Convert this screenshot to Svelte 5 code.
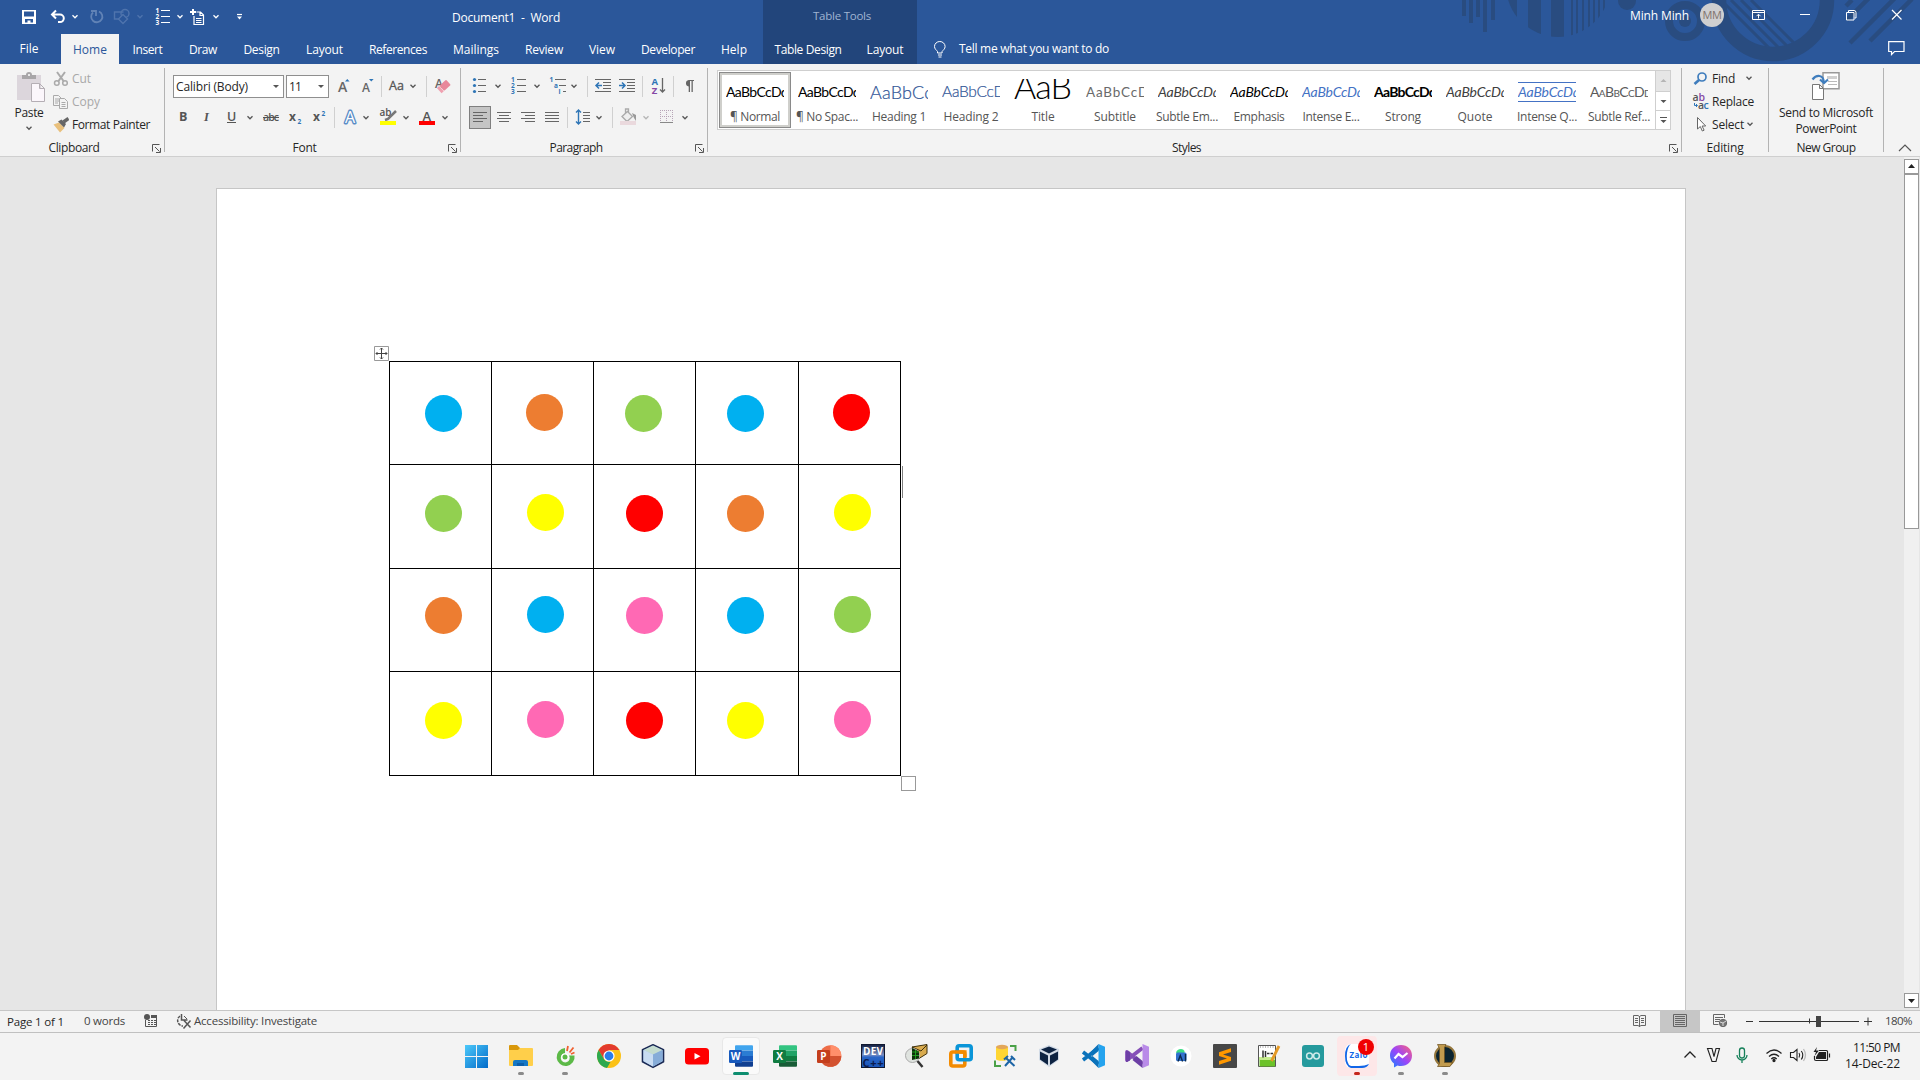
<script>
  // Spreads a label's letters so that it takes exactly the given width.
  function fit(node, width) {
    if (!width) return;
    const natural = node.getBoundingClientRect().width;
    node.style.letterSpacing = (width - natural) / node.textContent.length + 'px';
    node.style.width = width + 'px';
  }

  const tabs = [
    ['File', 19], ['Home', 34], ['Insert', 30], ['Draw', 28], ['Design', 36], ['Layout', 37],
    ['References', 58], ['Mailings', 46], ['Review', 38], ['View', 26], ['Developer', 54], ['Help', 26]
  ];

  const styles = [
    { s: 'AaBbCcDd', w: 62, n: '¶ Normal', l: 50, k: 'normal' },
    { s: 'AaBbCcDd', w: 62, n: '¶ No Spac...', l: 62, k: 'normal' },
    { s: 'AaBbCc', w: 63, n: 'Heading 1', l: 54, k: 'h1' },
    { s: 'AaBbCcD', w: 63, n: 'Heading 2', l: 55, k: 'h2' },
    { s: 'AaB', w: 57, n: 'Title', l: 23, k: 'title' },
    { s: 'AaBbCcD', w: 63, n: 'Subtitle', l: 42, k: 'subtitle' },
    { s: 'AaBbCcDd', w: 62, n: 'Subtle Em...', l: 62, k: 'it grey' },
    { s: 'AaBbCcDd', w: 62, n: 'Emphasis', l: 51, k: 'it' },
    { s: 'AaBbCcDd', w: 62, n: 'Intense E...', l: 57, k: 'it blue' },
    { s: 'AaBbCcDd', w: 62, n: 'Strong', l: 36, k: 'strong' },
    { s: 'AaBbCcDd', w: 62, n: 'Quote', l: 35, k: 'it grey' },
    { s: 'AaBbCcDd', w: 62, n: 'Intense Q...', l: 60, k: 'it blue ruled' },
    { s: 'AaBbCcDd', w: 61, n: 'Subtle Ref...', l: 62, k: 'caps' }
  ];

  const B = '#00b0f0', O = '#ed7d31', G = '#92d050', R = '#ff0000', Y = '#ffff00', P = '#ff69b4';
  const colours = [
    [B, O, G, B, R],
    [G, Y, R, O, Y],
    [O, B, P, B, G],
    [Y, P, R, Y, P]
  ];
  // Centres of the discs, measured from the table's top left corner.
  const xs = [54.5, 156.5, 255.5, 356.5, 463.5];
  const ys = [52.5, 152.5, 254.5, 359.5];
  const dots = colours.flatMap((row, r) =>
    row.map((fill, c) => ({
      fill,
      x: xs[c] - (r === 0 && (c === 1 || c === 2 || c === 4) ? 1 : 0),
      y: ys[r] - (c === 1 || c === 4 ? 1 : 0)
    }))
  );

  const apps = ['windows', 'explorer', 'coccoc', 'chrome', 'netbeans', 'youtube', 'word', 'excel', 'powerpoint', 'devcpp',
    'lens', 'vmware', 'database', 'virtualbox', 'vscode', 'visualstudio', 'android', 'sublime', 'notepad', 'arduino',
    'zalo', 'messenger', 'league'];
  const running = ['explorer', 'coccoc', 'messenger', 'league'];
</script>

{#snippet t(s, w, c = '')}<span class={'t ' + c} use:fit={w}>{s}</span>{/snippet}

{#snippet chev(x, y, c = '#555')}
  <path d="M{x - 2.5} {y - 1.2}l2.5 2.5l2.5 -2.5" fill="none" stroke={c} stroke-width="1.3" />
{/snippet}

{#snippet vsep(x, y)}
  <path d="M{x + 0.5} {y}v21" stroke="#d0d0d0" fill="none" />
{/snippet}

{#snippet launcher()}
  <svg class="launcher" width="9" height="9" viewBox="0 0 9 9" fill="none" stroke="#555"><path d="M.5 7.5v-7h7M3 3l4.5 4.5M8.5 4v4.5h-4.5" /></svg>
{/snippet}

{#snippet office(letter, dark, tones)}
  <path d="M7 1.2h16a1 1 0 0 1 1 1V6.6H6V2.2a1 1 0 0 1 1-1z" fill={tones[0]} />
  <path d="M6 6.6h18V12H6z" fill={tones[1]} />
  <path d="M6 12h18v5.4H6z" fill={tones[2]} />
  <path d="M6 17.4h18v4.4a1 1 0 0 1-1 1H7a1 1 0 0 1-1-1z" fill={tones[3]} />
  <rect x="0" y="6" width="13" height="13" rx="1.2" fill={dark} />
  <text x="6.5" y="16" text-anchor="middle" font-size="10" font-weight="700" fill="#fff">{letter}</text>
{/snippet}

<div class="screen">
  <header class="head">
    <svg class="deco" width="480" height="64" viewBox="1440 0 480 64" fill="#294c80">
      <defs>
        <clipPath id="disc"><circle cx="1558" cy="-15" r="52" /></clipPath>
        <clipPath id="inner"><circle cx="1773" cy="0" r="47" /></clipPath>
      </defs>
      <path d="M1462 0h4v16h-4zM1469 0h4v23h-4zM1476 0h4v17h-4zM1483 0h4v32h-4zM1491 0h4v20h-4z" />
      <path clip-path="url(#disc)" d="M1506 0h11v40h-11zM1528 0h13v40h-13zM1551 0h13v40h-13zM1571 0h2v40h-2zM1576 0h2v40h-2zM1582 0h2v40h-2zM1588 0h2v40h-2zM1593 0h2v40h-2zM1598 0h2v40h-2zM1603 0h2v40h-2zM1608 0h2v40h-2z" />
      <circle cx="1627" cy="1" r="9" />
      <circle cx="1685" cy="21" r="16" fill="none" stroke="#294c80" stroke-width="8" />
      <circle cx="1685" cy="21" r="6" />
      <circle cx="1773" cy="0" r="54" fill="none" stroke="#294c80" stroke-width="14.5" />
      <path clip-path="url(#inner)" stroke="#294c80" stroke-width="3" d="M1721 0l60 60M1731 0l60 60M1741 0l60 60M1751 0l60 60" />
      <path stroke="#294c80" stroke-width="4.5" d="M1846 6l6-6M1847 20l22-22M1850 43l47-47M1870 41l42-42M1897 14l14-14" />
    </svg>
    <div class="titlebar">
      <svg width="452" height="34" viewBox="0 0 452 34" fill="none" stroke="#fff" stroke-width="1.4">
        <path fill="#fff" stroke="none" fill-rule="evenodd" d="M22 10h14v14h-14zM24 11.5v5h10v-5zM25 19v3.5h2.5v-2h3v2h2.500v-3.500z" />
        <path stroke-width="2" d="M56 10.500l-4 4l4 4M52.500 14.500h7.500a3.800 3.800 0 0 1 0 7.600h-2" />
        {@render chev(75, 16.5, '#fff')}
        <path stroke="#6183b6" stroke-width="1.800" d="M93 12.500a5.600 5.600 0 1 0 6 -1M91 11h5v5" />
        <g stroke="#4f74ad"><path d="M122 19h-7.500v-7h9" /><circle cx="125" cy="13.500" r="4" /><path fill="#2b579a" d="M123 14.500l4.500 4.500l-4.500 4.500l-4.500 -4.500z" /></g>
        {@render chev(140, 16.5, '#4f74ad')}
        <path stroke-width="1" d="M161 10.500h9M161 16.500h9M161 22.500h9" />
        <g fill="#fff" stroke="none" font-size="6.500" font-weight="700"><text x="155.500" y="13">1</text><text x="155.500" y="19">2</text><text x="155.500" y="25.200">3</text></g>
        {@render chev(180, 16.5, '#fff')}
        <path stroke-width="1.200" d="M194 16v8.500h9.500v-9.500l-3-3h-4M200 12v3.500h3.500M196 18.500h5.500M196 20.500h5.500M196 22.500h5.500" /><path stroke-width="2" d="M190 12h6M193 9v6" />
        {@render chev(216, 16.5, '#fff')}
        <path stroke-width="1.200" d="M237 14.500h5" /><path fill="#fff" stroke="none" d="M237 16.500h5l-2.500 3z" />
      </svg>
      <div class="doctitle">{@render t('Document1  -  Word', 108)}</div>
      <div class="tools">{@render t('Table Tools', 58)}</div>
      <div class="user">{@render t('Minh Minh', 59)}<span class="avatar">MM</span></div>
      <svg width="196" height="34" viewBox="1724 0 196 34" fill="none" stroke="#fff" stroke-width="1">
        <path d="M1752.500 10.500h12v9h-12zM1752.500 12.500h12M1758.500 18.500v-4M1756.500 16.200l2-2l2 2" />
        <path d="M1800 14.500h10" />
        <path d="M1846.500 12.500h7.500v7.500h-7.500zM1848.500 12v-1.500h5.500q2 0 2 2v5.500h-1.500" />
        <path stroke-width="1.200" d="M1892 10l9.500 9.500M1901.500 10l-9.500 9.500" />
      </svg>
    </div>
    <nav class="tabs">
      {#each tabs as [name, w], i}
        <div class="tab" class:on={i === 1} class:file={i === 0} class:last={i === 11}>{@render t(name, w)}</div>
      {/each}
      <div class="tab ctx">{@render t('Table Design', 67)}</div>
      <div class="tab ctx">{@render t('Layout', 37)}</div>
      <div class="tell">
        <svg width="12" height="17" viewBox="0 0 12 17" fill="none" stroke="#fff"><path d="M3.500 12v-1.500c-1-1.500-3-2.500-3-5a5.300 5 0 0 1 10.600 0c0 2.500-2 3.500-3 5v1.500zM4 14h4M4.500 16h3" /></svg>
        {@render t('Tell me what you want to do', 150)}
      </div>
      <svg class="comment" width="17" height="15" viewBox="0 0 17 15" fill="none" stroke="#fff" stroke-width="1.200"><path d="M.700 .700h15.300v9.800h-9.500l-3 3v-3h-2.800z" /></svg>
    </nav>
  </header>

  <section class="ribbon">
    <div class="group g-clip">
      <div class="body">
        <div class="paste">
          <svg width="30" height="31" viewBox="16 72 30 31"><path fill="#dcd6dc" d="M17 75h24v25h-24z" /><path fill="#a8a6a8" d="M22 79v-4h4q0-3 3-3t3 3h4v4z" /><circle cx="29" cy="75" r="1" fill="#fff" /><path fill="#fbf6fb" stroke="#b4aeb4" d="M31.500 83.500h8l5 5v13h-13zM39.500 83.500v5h5" /></svg>
          {@render t('Paste', 29)}
          <svg width="10" height="10" viewBox="0 0 10 10">{@render chev(5, 5)}</svg>
        </div>
        <div class="cmds">
          <div class="cmd off"><svg width="16" height="16" viewBox="53 70 16 16" fill="none" stroke="#aaa" stroke-width="1.500"><circle cx="56.800" cy="82" r="2.300" /><circle cx="65" cy="82" r="2.300" /><path stroke-width="2" d="M57 71l6.500 9M65 71l-6.500 9" /></svg>{@render t('Cut', 19)}</div>
          <div class="cmd off"><svg width="16" height="16" viewBox="53 93 16 16" fill="#f3f3f3" stroke="#aaa"><path d="M53.500 94.500h5l3 3v7h-8zM55 98h4M55 100h4M55 102h3" /><path d="M59.500 97.500h5l3 3v7h-8zM61.500 101.500h4M61.500 103.500h4M61.500 105.500h4" /></svg>{@render t('Copy', 28)}</div>
          <div class="cmd"><svg width="16" height="16" viewBox="53 116 16 16"><path fill="#e9c07c" d="M53.500 123.500l5.500-2l5.500 5.500l-4.500 4.500z" /><path fill="#666" d="M58 120.500l3.500-2l4.500 4.500l-2 3.500z" /><path stroke="#666" stroke-width="3.500" d="M63.500 121l5-3.500" /></svg>{@render t('Format Painter', 78)}</div>
        </div>
      </div>
      <div class="label">{@render t('Clipboard', 51)}{@render launcher()}</div>
    </div>
    <div class="vs"></div>

    <div class="group g-font">
      <div class="body col">
        <div class="frow">
          <div class="combo c1">{@render t('Calibri (Body)', 72)}<i></i></div>
          <div class="combo c2">{@render t('11', 12)}<i></i></div>
          <svg width="131" height="24" viewBox="329 75 131 24" font-weight="600">
            <text x="338" y="92" font-size="14" fill="#666">A</text><path d="M345 81.500l2.300-2.500l2.300 2.500z" fill="#2e75b6" />
            <text x="362" y="92" font-size="12" fill="#666">A</text><path d="M369 79l2.300 2.500l2.300-2.500z" fill="#2e75b6" />
            {@render vsep(381, 76)}
            <text x="389" y="90" font-size="12.500" font-weight="400" fill="#555" stroke="#555" stroke-width=".300">Aa</text>
            {@render chev(413, 86)}
            {@render vsep(426, 76)}
            <text x="435" y="88" font-size="12" fill="#666">A</text><g transform="rotate(-42 444 87)"><rect x="441.500" y="83" width="9" height="7" rx="1" fill="#e8879b" /><rect x="438" y="83" width="3" height="7" fill="#f0a0b0" /></g>
          </svg>
        </div>
        <svg width="290" height="24" viewBox="170 105 290 24" fill="#555">
          <text x="179" y="121" font-size="12.500" font-weight="700">B</text>
          <text x="204" y="121" font-size="12.500" font-style="italic" font-family="Liberation Serif" font-weight="700">I</text>
          <text x="227" y="120.500" font-size="12.500" font-weight="600">U</text><path d="M227 122h9v1h-9z" />
          {@render chev(250, 117.5)}
          <text x="263" y="121" font-size="10.500" font-weight="600" textLength="16">abc</text><path d="M263 117h16v1h-16z" />
          <text x="289" y="121" font-size="12" font-weight="700">x</text><text x="297.500" y="123.500" font-size="6.500" font-weight="700" fill="#2e75b6">2</text>
          <text x="313" y="121" font-size="12" font-weight="700">x</text><text x="321.500" y="115.500" font-size="6.500" font-weight="700" fill="#2e75b6">2</text>
          {@render vsep(334, 107)}
          <text x="345" y="122.500" font-size="16" font-weight="400" fill="#fff" stroke="#5a8cc6" stroke-width="2.800" stroke-linejoin="round" paint-order="stroke">A</text>
          {@render chev(366, 117.5)}
          <text x="379.500" y="116" font-size="10" font-weight="600" textLength="12">ab</text><path d="M385 120l3-1l8-8" stroke="#777" stroke-width="2.500" fill="none" /><path fill="#ff0" d="M380 121h16v4h-16z" />
          {@render chev(406, 117.5)}
          <text x="422.500" y="120.500" font-size="13" font-weight="600">A</text><path fill="#f00" d="M419 121h16v4h-16z" />
          {@render chev(445, 117.5)}
        </svg>
      </div>
      <div class="label">{@render t('Font', 24)}{@render launcher()}</div>
    </div>
    <div class="vs"></div>

    <div class="group g-para">
      <div class="body">
        <svg width="246" height="75" viewBox="461 64 246 75" fill="none" stroke="#666">
          <g fill="#2e75b6" stroke="none"><circle cx="474.500" cy="79.500" r="1.600" /><circle cx="474.500" cy="85.500" r="1.600" /><circle cx="474.500" cy="91.500" r="1.600" /></g>
          <path d="M478 79.500h8M478 85.500h8M478 91.500h8" />{@render chev(498, 86)}
          <path d="M517 79.500h9M517 85.500h9M517 91.500h9" />
          <g fill="#2e75b6" stroke="none" font-size="6.500" font-weight="700"><text x="511" y="82">1</text><text x="511" y="88">2</text><text x="511" y="94">3</text><text x="549.500" y="82">1</text><text x="554" y="88">a</text><text x="558.500" y="94">i</text></g>
          {@render chev(537, 86)}
          <path d="M555 79.500h11M559 85.500h7M563 91.500h3" />{@render chev(574, 86)}
          {@render vsep(587, 76)}
          <path d="M595 79.500h16M603 82.500h8M603 85.500h8M603 88.500h8M595 91.500h16" /><path stroke="#2e75b6" stroke-width="1.500" d="M602 85.500h-5.500M599 82.500l-3 3l3 3" />
          <path d="M619 79.500h16M627 82.500h8M627 85.500h8M627 88.500h8M619 91.500h16" /><path stroke="#2e75b6" stroke-width="1.500" d="M619 85.500h5.500M622 82.500l3 3l-3 3" />
          {@render vsep(642, 76)}
          <g stroke="none" font-size="9.500" font-weight="700"><text x="651.500" y="85" fill="#2e75b6">A</text><text x="651.800" y="93.500" fill="#8548a5">Z</text></g>
          <path stroke-width="1.300" d="M662.500 78v14M660 89.500l2.500 2.500l2.500-2.500" />
          {@render vsep(673, 76)}
          <path fill="#666" stroke="none" d="M694 80v1h-1.200v11h-1.300v-11h-1.500v11h-1.300v-5.500a3.300 3.300 0 0 1 0-6.500z" />
          <rect x="469.500" y="106.500" width="21" height="22" fill="#c5c5c5" stroke="#7f7f7f" />
          <path d="M473 112.500h14M473 115.500h10M473 118.500h14M473 121.500h10" />
          <path d="M497 112.500h14M499 115.500h10M497 118.500h14M499 121.500h10" />
          <path d="M521 112.500h14M525 115.500h10M521 118.500h14M525 121.500h10" />
          <path d="M545 112.500h14M545 115.500h14M545 118.500h14M545 121.500h14" />
          {@render vsep(567, 107)}
          <path stroke="#2e75b6" stroke-width="1.400" d="M578.500 110v14M576 112.500l2.500-2.500l2.500 2.500M576 121.500l2.500 2.500l2.500-2.500" /><path d="M583 112.500h7M583 115.500h7M583 118.500h7M583 121.500h7" />
          {@render chev(599, 117.5)}
          {@render vsep(612, 107)}
          <path fill="#eee" stroke="#aaa" stroke-width="1.300" d="M622 116.500l5.500-5l5 5l-5.500 5zM625.500 114v-5h3v4" /><path fill="#999" stroke="none" d="M632 113l4 2v6l-2-3z" /><path fill="#ead9dd" stroke="none" d="M620 121h16v4h-16z" />
          {@render chev(646, 117.5, '#b5b5b5')}
          <path stroke="#b7a5b7" stroke-dasharray="1 1" d="M660 110.500h13M660 116.500h13M660.500 110v12M666.500 110v12M672.500 110v12" /><path stroke="#888" d="M660 122.500h13" />
          {@render chev(685, 117.5)}
        </svg>
      </div>
      <div class="label">{@render t('Paragraph', 53)}{@render launcher()}</div>
    </div>
    <div class="vs"></div>

    <div class="group g-styles">
      <div class="body">
        <div class="gallery">
          {#each styles as st, i}
            <div class="style" class:sel={i === 0}>
              <div class={'sample ' + st.k}>{@render t(st.s, st.w)}</div>
              <div class="sname">{@render t(st.n, st.l)}</div>
            </div>
          {/each}
          <div class="scroller">
            <div class="dis"><svg width="15" height="19" viewBox="0 0 15 19"><path d="M4.500 11h6l-3-3z" fill="#b5b5b5" /></svg></div>
            <div><svg width="15" height="18" viewBox="0 0 15 18"><path d="M4.500 8h6l-3 3z" fill="#555" /></svg></div>
            <div><svg width="15" height="18" viewBox="0 0 15 18"><path d="M4 6h7v1h-7zM4.500 9h6l-3 3z" fill="#555" /></svg></div>
          </div>
        </div>
      </div>
      <div class="label">{@render t('Styles', 29)}{@render launcher()}</div>
    </div>
    <div class="vs"></div>

    <div class="group g-edit">
      <div class="body">
        <div class="cmds">
          <div class="cmd"><svg width="17" height="16" viewBox="1692 71 17 16" fill="none" stroke="#3f7dbd"><circle cx="1702" cy="77" r="4" stroke-width="1.700" /><path stroke-width="2.600" d="M1699 80l-4.500 4" /></svg>{@render t('Find', 23)}<svg class="cv" width="10" height="10" viewBox="0 0 10 10">{@render chev(5, 4)}</svg></div>
          <div class="cmd"><svg width="17" height="17" viewBox="1692 93 17 17" font-size="10.500" font-weight="600"><text x="1692.500" y="101" fill="#555">a</text><text x="1698.500" y="101" fill="#8548a5">b</text><text x="1698" y="109" fill="#555">a</text><text x="1703.500" y="109" fill="#2e75b6">c</text><path d="M1694.500 103v2.500h2.500M1696 104l1.500 1.500l-1.500 1.500" fill="none" stroke="#2e75b6" /></svg>{@render t('Replace', 42)}</div>
          <div class="cmd"><svg width="17" height="17" viewBox="1692 116 17 17"><path fill="#fff" stroke="#666" d="M1697.500 117.500v11.500l2.800-2.500l2 4.500l1.800-.800l-2-4.200h3.600z" /></svg>{@render t('Select', 32)}<svg class="cv near" width="10" height="10" viewBox="0 0 10 10">{@render chev(5, 4)}</svg></div>
        </div>
      </div>
      <div class="label wide">{@render t('Editing', 37)}</div>
    </div>
    <div class="vs"></div>

    <div class="group g-new">
      <div class="body col send">
        <svg width="30" height="30" viewBox="1811 71 30 30"><path fill="#fff" stroke="#999" stroke-width="1.500" d="M1823 72.800h16v16h-16z" /><path fill="#d0d0d0" d="M1827 76h10v3h-10z" /><path d="M1828 81.500h9M1828 84.500h9" stroke="#bbb" /><path fill="#fff" stroke="#777" d="M1812.500 84.500h7l4 4v11h-11zM1819.500 84.500v4h4" /><path fill="none" stroke="#3f7dbd" stroke-width="2.200" d="M1812.500 79.500q3-4 7-3.500t4.500 6.500" /><path fill="none" stroke="#3f7dbd" stroke-width="2.200" d="M1820 79.500l4 3.500l4-3.500" /></svg>
        {@render t('Send to Microsoft', 94)}
        {@render t('PowerPoint', 61)}
      </div>
      <div class="label wide">{@render t('New Group', 59)}</div>
    </div>
    <div class="vs"></div>
    <svg class="collapse" width="14" height="8" viewBox="0 0 14 8"><path d="M1 7l6-6l6 6" fill="none" stroke="#555" stroke-width="1.200" /></svg>
  </section>

  <main class="canvas">
    <div class="page">
      <div class="tablewrap">
        <div class="grid">{#each dots as _}<div></div>{/each}</div>
        <svg class="over" width="512" height="415" viewBox="0 0 512 415">
          {#each dots as d}<circle cx={d.x} cy={d.y} r="18.500" fill={d.fill} />{/each}
        </svg>
        <svg class="handle" width="15" height="15" viewBox="0 0 15 15" fill="none" stroke="#444"><path stroke="#999" fill="#fff" d="M.500 .500h14v14h-14z" /><path d="M7.500 2v11M2 7.500h11M6 3.500l1.500-1.500l1.500 1.500M6 11.500l1.500 1.500l1.500-1.500M3.500 6l-1.500 1.500l1.500 1.500M11.500 6l1.500 1.500l-1.500 1.500" /></svg>
        <div class="caret"></div>
        <div class="resize"></div>
      </div>
    </div>
    <div class="scrollbar">
      <div class="sb"><svg width="15" height="15" viewBox="0 0 15 15"><path d="M4 9h7l-3.500-4z" fill="#222" /></svg></div>
      <div class="thumb"></div>
      <div class="sb end"><svg width="15" height="15" viewBox="0 0 15 15"><path d="M4 6h7l-3.500 4z" fill="#222" /></svg></div>
    </div>
  </main>

  <footer class="status">
    <div class="st1">{@render t('Page 1 of 1', 57)}</div>
    <div class="st2">{@render t('0 words', 41)}</div>
    <svg width="52" height="20" viewBox="142 1011 52 20" fill="none" stroke="#555"><circle cx="147" cy="1017" r="3" fill="#555" stroke="none" /><path d="M151 1015h6v3h-6z" fill="#555" stroke="none" /><path d="M145.500 1020v6.500h11v-11" /><path stroke-dasharray="2 1" d="M148 1020.500h8M148 1022.500h8M148 1024.500h8" /><path stroke-width="1.500" stroke-dasharray="3 1" d="M180 1016a5.500 5.500 0 0 0 3 10" /><path stroke-width="1.500" d="M181.500 1014v6h6M184 1020.500l6.500 7M190.500 1020.500l-7 8" /><path d="M184 1016l3 3" /></svg>
    {@render t('Accessibility: Investigate', 123)}
    <div class="fill"></div>
    <svg width="60" height="21" viewBox="1600 1011 60 21" fill="none" stroke="#666"><path d="M1633.500 1015.500h4.500l1.500 1l1.500-1h4.500v10h-4.500l-1.500 1l-1.500-1h-4.500zM1639.500 1016v11M1635 1018.500h3M1635 1020.500h3M1635 1022.500h3M1641 1018.500h3M1641 1020.500h3M1641 1022.500h3" /></svg>
    <div class="viewsel"><svg width="40" height="21" viewBox="1660 1011 40 21" fill="none" stroke="#666"><path d="M1673.500 1014.500h13v12h-13zM1675 1016.500h10M1675 1018.500h10M1675 1020.500h10M1675 1022.500h10M1675 1024.500h10" /></svg></div>
    <svg width="185" height="21" viewBox="1700 1011 185 21" fill="none" stroke="#666"><path d="M1724.500 1018v-3.500h-11v10h5M1715 1017.500h8M1715 1019.500h5M1715 1021.500h4" /><circle cx="1723" cy="1023" r="3.700" fill="#777" stroke="#666" /><path stroke="#f3f3f3" stroke-width=".800" d="M1720 1022l3 1l3-2M1723 1023v3" />
      <g stroke="#333"><path d="M1746 1021.500h7M1864 1021.500h8M1868 1017.500v8M1759 1021.500h100M1809.500 1018.500v5" /></g><path fill="#444" stroke="none" d="M1816 1016h5v11h-5z" /></svg>
    <div class="zoom">{@render t('180%', 27)}</div>
  </footer>

  <footer class="taskbar">
    <div class="apps">
      {#each apps as app}
        <div class={'app ' + app} class:running={running.includes(app)}>
          <svg width="24" height="24" viewBox="0 0 24 24">
            {#if app === 'windows'}
              <defs><linearGradient id="wg" x1="0" y1="0" x2="24" y2="24" gradientUnits="userSpaceOnUse"><stop offset="0" stop-color="#4ecbfb" /><stop offset="1" stop-color="#0068c8" /></linearGradient></defs>
              <path fill="url(#wg)" d="M0 1h11v11h-11zM12 1h11v11h-11zM0 13h11v11h-11zM12 13h11v11h-11z" />
            {:else if app === 'explorer'}
              <path fill="#d9980b" d="M0 2q0-1 1-1h7l3 3v4h-11z" /><path fill="#ffcf4a" d="M0 6h9l2-2h12q1 0 1 1v16q0 1-1 1h-22q-1 0-1-1z" /><path fill="#1577c4" d="M4 22v-4q0-2 2-2h11q2 0 2 2v4z" /><path fill="#0c5ea8" d="M8 19h7v3h-7z" />
            {:else if app === 'coccoc'}
              <path fill="#5cb947" d="M12 4a9 9 0 1 0 9.500 7.500h-5.500a4.500 4.500 0 1 1-4-2z" /><circle cx="12" cy="13" r="3.800" fill="#fff" /><circle cx="12" cy="13" r="2.500" fill="#5cb947" /><path fill="none" stroke="#f06030" stroke-width="1.800" d="M14 7l1-5M16.500 8.500l4-5M18 10l3.500-1.500" />
            {:else if app === 'chrome'}
              <circle cx="12" cy="12" r="12" fill="#fbc116" /><path fill="#e33b2e" d="M1.600 6a12 12 0 0 1 20.800 0h-10.400l-5.200 9z" /><path fill="#2da94f" d="M1.600 6l5.200 9q2 3 5.200 3l1.500 0l-3.500 5.900a12 12 0 0 1-8.400-17.900z" /><circle cx="12" cy="12" r="5.600" fill="#fff" /><circle cx="12" cy="12" r="4.400" fill="#2a7de9" />
            {:else if app === 'netbeans'}
              <path fill="#a9c8e8" stroke="#1b2a55" stroke-width="1.600" stroke-linejoin="round" d="M12 .800l10.500 5v12l-10.500 5.600l-10.500-5.600v-12z" /><path fill="#c5dccf" d="M12 1.500l9.500 4.500l-9.500 4.500l-9.500-4.500z" /><path fill="#86acd8" d="M12 10.500l9.500-4.500v11l-9.500 5.500z" /><path fill="#c9dcf2" d="M12 10.500l-9.500-4.500v11l9.500 5.500z" />
            {:else if app === 'youtube'}
              <rect y="4" width="24" height="16.500" rx="3.500" fill="#f00" /><path fill="#fff" d="M9.500 9v6.500l6-3.250z" />
            {:else if app === 'word'}
              {@render office('W', '#185abd', ['#41a5ee', '#2b7cd3', '#185abd', '#103f91'])}
            {:else if app === 'excel'}
              {@render office('X', '#107c41', ['#33c481', '#21a366', '#107c41', '#185c37'])}
            {:else if app === 'powerpoint'}
              <circle cx="13.500" cy="12" r="10.800" fill="#ed6c47" /><path fill="#ff8f6b" d="M13.500 1.200a10.800 10.800 0 0 1 10.800 10.800h-10.800z" /><path fill="#d35230" d="M2.700 12h21.600a10.800 10.800 0 0 1-21.600 0z" /><rect y="6" width="13" height="13" rx="1.200" fill="#c43e1c" /><text x="6.500" y="16" text-anchor="middle" font-size="10" font-weight="700" fill="#fff">P</text>
            {:else if app === 'devcpp'}
              <defs><linearGradient id="dg" x1="0" y1="0" x2="0" y2="1"><stop offset="0" stop-color="#101c3c" /><stop offset=".450" stop-color="#7a8fc4" /><stop offset=".550" stop-color="#2a66c8" /><stop offset="1" stop-color="#1a55b8" /></linearGradient></defs>
              <rect x=".500" y=".500" width="23" height="23" fill="url(#dg)" stroke="#101830" /><text x="12" y="11" text-anchor="middle" font-size="10" font-weight="700" fill="#fff" textLength="20">DEV</text><text x="12" y="22.500" text-anchor="middle" font-size="11" font-weight="700" fill="#0b1b4c" textLength="21">C++</text>
            {:else if app === 'lens'}
              <path fill="#d9ab4e" stroke="#3f300c" d="M7 3l15-2.500v9l-8 5z" /><path fill="none" stroke="#3f300c" d="M7 3l9 4l6-6" /><circle cx="7.500" cy="11.500" r="7" fill="#dfe3df" stroke="#aaa" /><path fill="#0b300b" d="M7 4l7 3.500v7l-7 1.500z" /><path stroke="#25b425" stroke-width=".800" d="M7 8h7M7 11.500h7M10.500 6v9" /><path stroke="#333" stroke-width="2.500" d="M12.500 17l5 6" />
            {:else if app === 'vmware'}
              <rect x="1.800" y="8" width="14" height="14" rx="2" fill="none" stroke="#f38b00" stroke-width="3.600" /><rect x="8.200" y="1.800" width="14" height="14" rx="2" fill="none" stroke="#0a95d8" stroke-width="3.600" /><path d="M6 8h9.800v5" fill="none" stroke="#f38b00" stroke-width="3.600" />
            {:else if app === 'database'}
              <path fill="#ffd633" d="M3 3h12v12h-12z" /><ellipse cx="9" cy="15" rx="6" ry="1.800" fill="#ffd633" /><ellipse cx="9" cy="3" rx="6" ry="2.200" fill="#e3a75a" /><path fill="none" stroke="#4aa147" stroke-width="2" d="M17 2h5.500v5M2 16.500v5.500h6" /><path fill="none" stroke="#1d65a6" stroke-width="2" d="M12 22l8-9M13 14l8.500 8M11 15.500l4-3.500M18 12l4 4" />
            {:else if app === 'virtualbox'}
              <path fill="#d2dbe6" d="M12 1l10 4v11l-10 7l-10-7v-11z" /><path fill="#0d2342" d="M12 2.500l8 3l-8 4l-8-4zM3 7.500l8 4v9.500l-8-5.500zM21 7.500l-8 4v9.500l8-5.500z" />
            {:else if app === 'vscode'}
              <path fill="none" stroke="#0b72ba" stroke-width="3.600" stroke-linejoin="round" d="M17.500 4l-15.500 12M2 8l15.500 12" /><path fill="#25a3ee" d="M17.500 0l6.500 2.800v18.400l-6.500 2.800z" /><path fill="#0b72ba" d="M17.500 0v7l-6 5l-3-3zM17.500 24v-7l-6-5l-3 3z" />
            {:else if app === 'visualstudio'}
              <path fill="none" stroke="#8650b8" stroke-width="3.800" stroke-linejoin="round" d="M17.500 4l-15.500 12v-8l15.500 12" /><path fill="#b98be8" d="M17.500 0l6.500 2.800v18.400l-6.500 2.800z" /><path fill="#6c3fa5" d="M1 6.500l4 1.500v8.500l-4 1.500zM17.500 24v-7l-6-5l-4 4z" />
            {:else if app === 'android'}
              <circle cx="12" cy="12" r="10.500" fill="#fff" /><path fill="#3ddc84" d="M7 8.500q1-3.500 5-3.500q2.500 0 3.500 2v2h-8z" /><rect x="7" y="8.500" width="10.500" height="8.500" rx="1.500" fill="#3372cf" /><path fill="none" stroke="#0b2a4d" stroke-width="1.400" d="M9 17.500l2.300-6l2.300 6M16.500 10v7.500" />
            {:else if app === 'sublime'}
              <rect width="24" height="24" rx="1" fill="#474747" /><path fill="#ff9800" d="M6 8.300l12-4v3.600l-8 2.700l8 2.500v3.600l-12 4v-3.600l8-2.700l-8-2.500z" />
            {:else if app === 'notepad'}
              <path fill="#fff" stroke="#555" d="M1.500 1.500h17v21h-17z" /><path fill="#6cc22a" d="M2.500 13h15.500v9.500h-15.500z" /><path fill="#c6ec8d" d="M2.500 13h15.500v3h-15.500z" /><path stroke="#333" stroke-width="1.500" d="M6 6.500v7M8.500 7v6M10 9.500h2.500M13.500 9.500h2.500" /><path stroke="#e59a26" stroke-width="2.800" d="M22 2l-7.500 15" /><path stroke="#777" stroke-dasharray="1 1.500" d="M3 3h15" />
            {:else if app === 'arduino'}
              <rect x="1" y="1" width="22" height="22" rx="3" fill="#259a9d" /><circle cx="8.500" cy="12" r="2.900" fill="none" stroke="#cdeaea" stroke-width="1.500" /><circle cx="15.500" cy="12" r="2.900" fill="none" stroke="#cdeaea" stroke-width="1.500" />
            {:else if app === 'zalo'}
              <rect width="24" height="24" rx="6" fill="#fff" stroke="none" /><path fill="#1266e8" d="M6 0q-6 2-6 12t6 12h11q5 0 7-4q-4 2-10 2h-8l-2-1q-3-5-2-12t4-9z" /><text x="4.500" y="14" font-size="8" font-weight="700" fill="#1266e8" textLength="18">Zalo</text>
            {:else if app === 'messenger'}
              <defs><linearGradient id="mg" x1="0" y1="1" x2="1" y2="0"><stop offset="0" stop-color="#1583ff" /><stop offset=".500" stop-color="#9b45fa" /><stop offset="1" stop-color="#ff6478" /></linearGradient></defs>
              <path fill="url(#mg)" d="M12 1c-6.500 0-11 4.600-11 10.500c0 3.500 1.500 6 4 8v4l3.500-2q1.700.500 3.500.500c6.500 0 11-4.600 11-10.500s-4.500-10.500-11-10.500z" /><path fill="none" stroke="#fff" stroke-width="2.200" d="M5.500 14.500l4-4.500l4 3l5-4" />
            {:else}
              <circle cx="12" cy="12" r="10" fill="#0b2430" stroke="#94763c" stroke-width="2" /><path fill="#c19b4e" stroke="#694d1c" stroke-width=".700" d="M4.500 .500h8.500l-1.500 3v15h8l-2.500 4h-12.500l2-3v-15z" />
            {/if}
          </svg>
          {#if app === 'zalo'}<b class="badge">1</b>{/if}
        </div>
      {/each}
    </div>
    <svg width="160" height="46" viewBox="1678 1034 160 46" fill="none" stroke="#222" stroke-width="1.300">
      <path d="M1684.500 1058.500l5.500-5.500l5.500 5.500" />
      <path stroke-width="1.100" d="M1707.500 1049.500h4.500l2 8l2-8h3.500l-3.500 13h-4z" />
      <g stroke="#16805a"><path d="M1739.500 1051.500a2.500 2.500 0 0 1 5 0v5a2.500 2.500 0 0 1-5 0zM1737 1056a5 5 0 0 0 10 0M1742 1061v3" /></g>
      <path d="M1766.500 1054.500q7.500-7 15 0M1769 1057.500q5-4.500 10 0M1771.300 1060q2.700-2.500 5.400 0" /><circle cx="1774" cy="1061.500" r="1" fill="#222" />
      <path stroke-width="1.100" d="M1790.500 1053.500h3l3.500-3v11l-3.500-3h-3zM1799 1054q1.500 2 0 4.500M1801.300 1052q3 4 0 8.500" /><path stroke="#bbb" d="M1803.500 1050q4 6 0 12" />
      <path stroke-width="1.200" d="M1819 1051.500h7.500q1 0 1 1v8q0 1-1 1h-10.500q-1.500 0-1.500-1.500v-3M1829.500 1054.500v4" /><path fill="#222" stroke="none" d="M1819 1053h7v7h-10v-2zM1817 1048l-3.500 5h2.500l-1.500 4l4.500-5.500h-3z" />
    </svg>
    <div class="clock">{@render t('11:50 PM', 47)}{@render t('14-Dec-22', 55)}</div>
  </footer>
</div>

<style>
  :global(body) { overflow: hidden; }
  .screen { width: 1920px; height: 1080px; display: flex; flex-direction: column; font: 12px/16px 'Open Sans', 'Noto Sans', sans-serif; color: #262626; background: #f3f3f3; overflow: hidden; }
  .screen * { box-sizing: border-box; }
  svg { display: block; flex: none; }
  .t { display: inline-block; white-space: pre; flex: none; }

  .head { height: 64px; flex: none; background: #2b579a; color: #fff; position: relative; }
  .deco { position: absolute; right: 0; top: 0; }
  .titlebar { height: 34px; display: flex; position: relative; }
  .doctitle { width: 311px; padding-top: 10px; }
  .tools { width: 154px; background: #22457b; color: #a0b4d2; padding: 8px 0 0 50px; font-size: 11.5px; }
  .user { width: 807px; display: flex; justify-content: flex-end; gap: 11px; padding-top: 3px; line-height: 25px; }
  .avatar { width: 24px; height: 24px; border-radius: 50%; background: #cfcfd0; color: #81736e; font-size: 11px; line-height: 24px; text-align: center; letter-spacing: -.3px; }
  .tabs { height: 30px; display: grid; grid-template-columns: 61px 58px 57px 54px 63px 63px 84px 72px 64px 52px 80px 55px 90px 64px 1fr auto; position: relative; }
  .tab { height: 30px; padding-top: 2px; text-align: center; line-height: 28px; }
  .tab.file { padding: 0 3px 0 0; line-height: 30px; }
  .tab.last { padding-right: 3px; }
  .tab.on { background: #f3f3f3; color: #2b579a; }
  .tab.ctx { background: #22457b; }
  .tell { display: flex; gap: 13px; padding: 0 0 0 17px; line-height: 29px; }
  .tell svg { margin-top: 7px; }
  .comment { margin: 7px 15px 0 0; }

  .ribbon { height: 93px; flex: none; display: flex; background: #f3f3f3; border-bottom: 1px solid #cfcfcf; }
  .vs { width: 1px; margin: 4px 0; background: #b3b3b3; }
  .group { flex: none; }
  .body { height: 75px; display: flex; }
  .body.col { flex-direction: column; }
  .label { height: 17px; padding: 1px 16px 0 0; text-align: center; line-height: 16px; position: relative; }
  .label .t { line-height: 16px; }
  .label.wide { padding-right: 0; }
  .launcher { position: absolute; right: 3px; top: 5px; }
  .g-clip { width: 164px; }
  .g-font { width: 295px; }
  .g-para { width: 246px; }
  .g-styles { width: 973px; }
  .g-edit { width: 86px; }
  .g-new { width: 114px; }
  .paste { width: 53px; padding: 8px 0 0 5px; display: flex; flex-direction: column; align-items: center; }
  .paste .t { margin-top: 2px; }
  .paste svg:last-child { margin-top: 2px; }
  .paste svg:first-child { margin-left: 3px; }
  .cmds { padding-top: 3px; }
  .cmd { height: 23px; display: flex; align-items: center; gap: 3px; line-height: 23px; }
  .cmd.off { color: #a8a8a8; }
  .g-edit .cmds { padding-left: 10px; }
  .cv { margin-left: 6px; }
  .cv.near { margin-left: -2px; }
  .frow { display: flex; padding: 11px 0 0 8px; height: 41px; }
  .combo { height: 23px; border: 1px solid #8f8f8f; background: #fff; display: flex; align-items: center; justify-content: space-between; padding: 0 4px 0 2px; }
  .c1 { width: 111px; margin-right: 2px; }
  .c2 { width: 43px; margin-right: 0; }
  .combo i { border: 3px solid transparent; border-top-color: #555; border-bottom: 0; }
  .g-font .body > svg { margin-left: 5px; }

  .gallery { margin: 6px 0 0 9px; height: 60px; width: 954px; border: 1px solid #cfcfcf; background: #fff; display: flex; }
  .style { width: 72px; height: 58px; padding: 8px 7px 0; flex: none; }
  .style:first-child { margin-left: 1px; }
  .style.sel { margin-top: 1px; height: 56px; padding: 4px 4px 0; border: 3px solid #cfcfcb; outline: 1px solid #8a8a8a; outline-offset: -1px; }
  .sample { width: 58px; height: 27px; overflow: hidden; font: 14px/26px Lato, 'Open Sans', sans-serif; color: #000; }
  .sname { display: flex; justify-content: center; margin: 3px -7px 0; color: #555; }
  .sample.h1 { font-size: 18px; line-height: 27px; font-weight: 300; color: #2f5496; -webkit-text-stroke: .2px #2f5496; }
  .sample.h2 { font-size: 15.500px; line-height: 25px; font-weight: 300; color: #2f5496; -webkit-text-stroke: .2px #2f5496; }
  .sample.title { font-size: 34px; line-height: 14px; font-weight: 300; }
  .sample.subtitle { font-size: 13.500px; color: #6a6a6a; }
  .sample.it { font-style: italic; }
  .sample.grey { color: #404040; }
  .sample.blue { color: #4472c4; }
  .sample.strong { font-weight: 700; }
  .sample.caps { font-variant: small-caps; color: #5a5a5a; }
  .sample.ruled { background: linear-gradient(#4472c4, #4472c4) 0 3px / 100% 1px no-repeat, linear-gradient(#4472c4, #4472c4) 0 22px / 100% 1px no-repeat; }
  .scroller { margin-left: auto; width: 15px; border-left: 1px solid #cfcfcf; }
  .scroller div { height: 19px; }
  .scroller div + div { border-top: 1px solid #cfcfcf; height: 19px; }
  .scroller .dis { background: #e6e6e6; height: 20px; }
  .send { align-items: center; padding-top: 7px; }
  .send .t:nth-child(2) { margin-top: 4px; }
  .collapse { margin: 80px 0 0 14px; }

  .canvas { height: 853px; flex: none; background: #e6e6e6; display: flex; justify-content: space-between; padding: 0 1px 0 216px; }
  .page { width: 1470px; margin-top: 31px; background: #fff; border: 1px solid #c6c6c6; border-bottom: 0; padding: 172px 0 0 172px; }
  .tablewrap { width: 512px; height: 415px; position: relative; }
  .grid { width: 512px; height: 415px; display: grid; grid-template-columns: 101px 101px 101px 102px 101px; grid-template-rows: 102px 103px 102px 103px; gap: 1px; background: #000; border: 1px solid #000; }
  .grid div { background: #fff; }
  .over { position: absolute; left: 0; top: 0; }
  .handle { position: absolute; left: -15px; top: -15px; }
  .caret { position: absolute; left: 513px; top: 105px; width: 1px; height: 32px; background: #808080; }
  .resize { position: absolute; left: 512px; top: 415px; width: 15px; height: 15px; border: 1px solid #999; }
  .scrollbar { width: 15px; padding-top: 2px; height: 851px; background: #f0f0f0; display: flex; flex-direction: column; }
  .sb { width: 15px; height: 15px; background: #fff; box-shadow: inset 0 0 0 1px #999; flex: none; }
  .thumb { height: 355px; background: #fff; border: 1px solid #999; }
  .sb.end { margin-top: auto; }

  .status { height: 23px; flex: none; border-top: 1px solid #c6c6c6; border-bottom: 1px solid #c0c0c0; display: flex; line-height: 20px; font-size: 11.500px; color: #444; }
  .st1 { padding: 1px 0 0 7px; width: 84px; color: #262626; }
  .st2 { width: 58px; }
  .fill { flex: 1; }
  .viewsel { background: #c6c6c6; height: 21px; }
  .zoom { width: 35px; }

  .taskbar { height: 47px; display: flex; padding-left: 455px; color: #1c1c1c; }
  .apps { width: 1223px; display: flex; padding-top: 4px; }
  .app { width: 44px; height: 40px; display: flex; align-items: flex-start; justify-content: center; padding-top: 7px; position: relative; flex: none; }
  .app svg { overflow: visible; }
  .app.running::after { content: ''; position: absolute; left: 19px; top: 35px; width: 6px; height: 3px; border-radius: 2px; background: #8a8a8a; }
  .app.word { background: #fafafa; border: 1px solid #e8e8e8; border-radius: 4px; width: 38px; height: 38px; margin: 0 3px; padding-top: 6px; }
  .app.word::after { content: ''; position: absolute; left: 10px; top: 34px; width: 16px; height: 3px; border-radius: 2px; background: #0e8e70; }
  .app.zalo { background: #fde7e8; border-radius: 4px; width: 40px; margin: -1px 2px 0; padding-top: 8px; }
  .app.zalo::after { content: ''; position: absolute; left: 17px; top: 36px; width: 6px; height: 3px; border-radius: 2px; background: #c4271d; }
  .badge { position: absolute; left: 21px; top: 3px; width: 16px; height: 16px; border-radius: 50%; background: #f00000; color: #fff; font-size: 11px; font-weight: 400; line-height: 16px; text-align: center; }
  .clock { width: 62px; display: flex; flex-direction: column; align-items: flex-end; padding-top: 7px; }
</style>
